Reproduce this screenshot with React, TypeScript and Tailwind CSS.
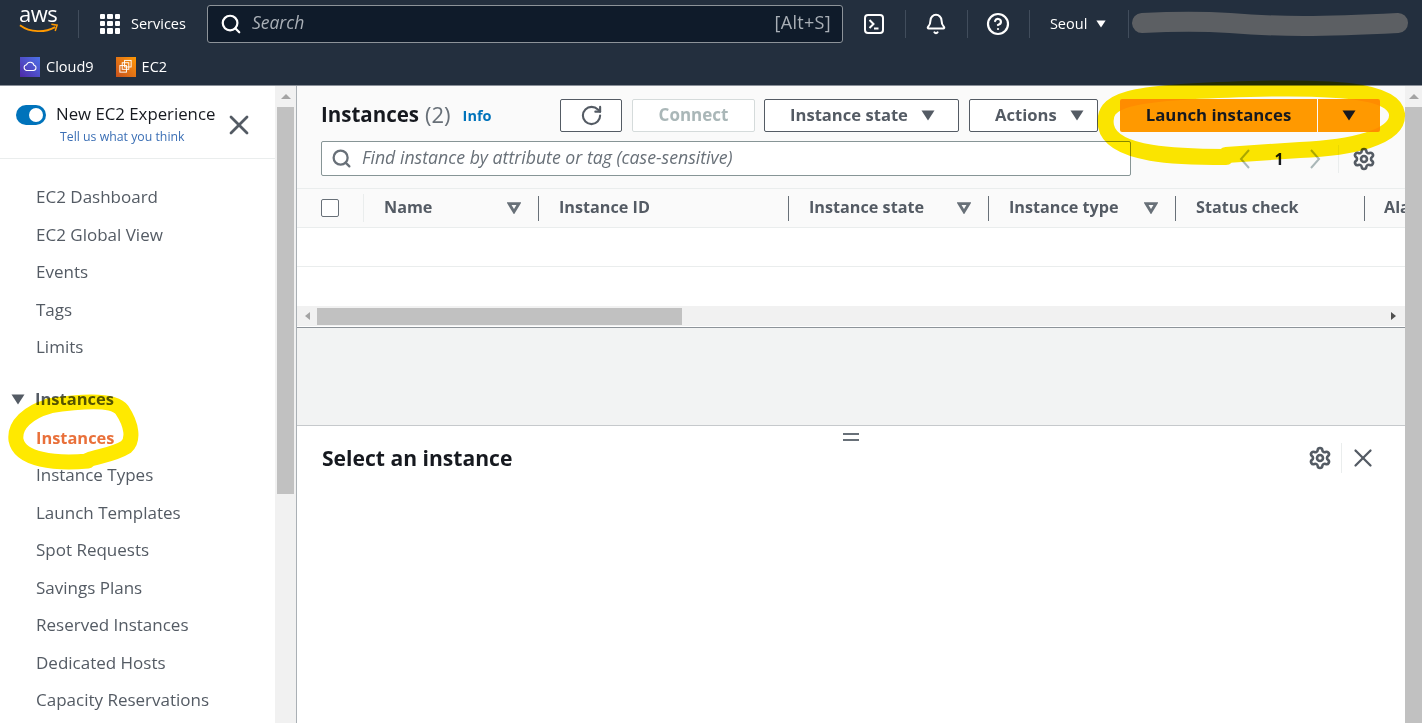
import React from "react";
import { Search, Bell, RotateCw, Settings, X, CircleHelp } from "lucide-react";

const Down: React.FC<{ className?: string }> = ({ className }) => (
  <svg viewBox="0 0 14 11" className={className} fill="currentColor">
    <path d="M0.5 0.5h13L7 10.5z" />
  </svg>
);

const FilterArrow: React.FC = () => (
  <svg viewBox="0 0 14 12" className="ml-auto w-[14px] h-[12px] text-[#687078]" fill="none" stroke="currentColor" strokeWidth="2.8">
    <path d="M2 1.6h10L7 9.8z" />
  </svg>
);

const Divider: React.FC = () => <div className="w-px h-[28px] bg-[#414d5c]" />;

const OutlineBtn: React.FC<{ label: string; w: string }> = ({ label, w }) => (
  <button className={`${w} h-[33px] flex items-center pl-[25px] gap-[13px] border border-[#545b64] rounded-[2px] bg-white text-[#545b64] font-bold text-[16.6px]`}>
    <span className="pb-[1px]">{label}</span>
    <Down className="w-[14px] h-[11px]" />
  </button>
);

const topNav = ["EC2 Dashboard", "EC2 Global View", "Events", "Tags", "Limits"];
const instanceNav = ["Instance Types", "Launch Templates", "Spot Requests", "Savings Plans", "Reserved Instances", "Dedicated Hosts", "Capacity Reservations"];

const columns = [
  { label: "Name", w: "w-[175px]", filter: true },
  { label: "Instance ID", w: "w-[250px]", filter: false },
  { label: "Instance state", w: "w-[200px]", filter: true },
  { label: "Instance type", w: "w-[187px]", filter: true },
  { label: "Status check", w: "w-[189px]", filter: false },
];

const Header: React.FC = () => (
  <header className="h-[86px] shrink-0 bg-[#232f3e] border-b border-[#8a9099] text-white">
    <div className="h-[47px] flex items-center">
      <div className="w-[78px] pl-[19px] relative h-full">
        <div className="text-[22px] leading-[26px] tracking-[-0.5px] font-normal">aws</div>
        <svg viewBox="0 0 42 12" className="w-[40px] h-[12px] -mt-[3px]" fill="none">
          <path d="M1 2c11 8 26 8 37 2" stroke="#ff9900" strokeWidth="2" />
          <path d="M34 1l6 1-2 6" stroke="#ff9900" strokeWidth="1.6" />
        </svg>
      </div>
      <div className="w-px h-[28px] bg-[#414d5c]" />
      <div className="ml-[21px] w-[20px] h-[20px] grid grid-cols-3 gap-[2px]">
        {Array.from({ length: 9 }).map((_, i) => (
          <div key={i} className="bg-white rounded-[1px]" />
        ))}
      </div>
      <span className="ml-[11px] text-[14.5px] font-medium">Services</span>
      <div className="ml-[21px] w-[636px] h-[38px] flex items-center border border-[#8d9399] rounded-[3px] bg-[#0f1b2a] pl-[12px] pr-[11px]">
        <Search className="w-[22px] h-[22px] text-white" strokeWidth={2.4} />
        <span className="ml-[10px] pb-[2px] italic text-[#a9afb6] text-[17.5px]">Search</span>
        <span className="ml-auto pb-[2px] text-[#a9afb6] text-[18px] tracking-[0.3px]">[Alt+S]</span>
      </div>
      <div className="w-[62px] flex justify-center">
        <svg viewBox="0 0 20 20" className="w-[20px] h-[20px]" fill="none" stroke="white" strokeWidth="2">
          <rect x="1" y="1" width="18" height="18" rx="3" />
          <path d="M5.5 6l4 4-4 4M10 14.5h4.5" />
        </svg>
      </div>
      <Divider />
      <div className="w-[61px] flex justify-center">
        <Bell className="w-[22px] h-[22px]" strokeWidth={2.2} />
      </div>
      <Divider />
      <div className="w-[61px] flex justify-center">
        <CircleHelp className="w-[24px] h-[24px]" strokeWidth={2.2} />
      </div>
      <Divider />
      <span className="ml-[20px] text-[14.5px] font-medium">Seoul</span>
      <Down className="ml-[9px] w-[10px] h-[8px]" />
      <div className="ml-[22px]"><Divider /></div>
      <svg viewBox="0 0 280 26" className="w-[282px] h-[26px]" fill="none">
        <path d="M12 12C50 10 70 10 100 12C150 16 190 16 268 12" stroke="#5c5f63" strokeWidth="20" strokeLinecap="round" />
      </svg>
    </div>
    <div className="h-[38px] pt-px flex items-center pl-[20px] text-[14.5px] font-medium">
      <div className="w-[20px] h-[20px] bg-gradient-to-tr from-[#4d27a8] to-[#4a72e8] flex items-center justify-center">
        <svg viewBox="0 0 16 12" className="w-[14px] h-[11px]" fill="none" stroke="white" strokeWidth="1.2">
          <path d="M4 10.5h8a3 3 0 0 0 .6-5.9A4.5 4.5 0 0 0 4 4a3.3 3.3 0 0 0 0 6.5z" />
        </svg>
      </div>
      <span className="ml-[6px]">Cloud9</span>
      <div className="ml-[22px] w-[20px] h-[20px] bg-gradient-to-tr from-[#c8511b] to-[#ff9900] flex items-center justify-center">
        <svg viewBox="0 0 16 16" className="w-[15px] h-[15px]" fill="none" stroke="white" strokeWidth="1">
          <rect x="7" y="1.5" width="7" height="7" />
          <rect x="4.5" y="4" width="7" height="7" />
          <rect x="2" y="7" width="7" height="7" />
        </svg>
      </div>
      <span className="ml-[6px]">EC2</span>
    </div>
  </header>
);

const Sidebar: React.FC = () => (
  <aside className="w-[275px] shrink-0 bg-white overflow-hidden">
    <div className="h-[73px] border-b border-[#eaeded] flex relative">
      <div className="pl-[16px] pt-[19px]">
        <div className="w-[30px] h-[20px] rounded-full bg-[#0073bb] flex items-center justify-end pr-[3px]">
          <div className="w-[14px] h-[14px] rounded-full bg-white" />
        </div>
      </div>
      <div className="ml-[11px] pt-[16px]">
        <div className="text-[16.8px] -ml-[1px] leading-[24px] text-[#16191f]">New EC2 Experience</div>
        <div className="ml-[3px] mt-[2px] text-[12.3px] leading-[18px] text-[#3b6fb5]">Tell us what you think</div>
      </div>
      <X className="absolute left-[223px] top-[23px] w-[32px] h-[32px] text-[#545b64]" strokeWidth={2.1} />
    </div>
    <nav className="pt-[19px] text-[17px] text-[#545b64]">
      {topNav.map((item) => (
        <div key={item} className="h-[37.5px] flex items-center pl-[36px]">{item}</div>
      ))}
      <div className="mt-[15.5px] h-[37.5px] flex items-center pl-[11px] font-bold text-[16.5px] text-[#545b64]">
        <Down className="w-[14px] h-[11px]" />
        <span className="ml-[10px]">Instances</span>
      </div>
      <div className="mt-[2px] h-[35.5px] flex items-center pl-[36px] font-bold text-[16.4px] text-[#e9703a]">Instances</div>
      {instanceNav.map((item) => (
        <div key={item} className="h-[37.5px] flex items-center pl-[36px]">{item}</div>
      ))}
    </nav>
  </aside>
);

const VScrollbar: React.FC<{ className: string; thumb: string }> = ({ className, thumb }) => (
  <div className={`${className} shrink-0 bg-[#f1f1f1] flex flex-col items-center`}>
    <div className="h-[21px] flex items-center justify-center">
      <div className="w-0 h-0 border-x-[5px] border-x-transparent border-b-[5px] border-b-[#a3a3a3]" />
    </div>
    <div className={`w-full bg-[#c1c1c1] ${thumb}`} />
  </div>
);

const PagerChevron: React.FC<{ d: string; className: string }> = ({ d, className }) => (
  <svg viewBox="0 0 12 20" className={`${className} w-[12px] h-[20px] text-[#aab7b8]`} fill="none" stroke="currentColor" strokeWidth="2">
    <path d={d} />
  </svg>
);

const Toolbar: React.FC = () => (
  <div className="h-[103px] shrink-0 bg-[#fafafa] border-b border-[#eaeded] pl-[24px] pr-[25px] pt-[13px]">
    <div className="flex items-center h-[33px]">
      <h1 className="text-[20.5px] pb-[2px] font-bold text-[#16191f]">Instances</h1>
      <span className="ml-[6px] pb-[2px] text-[22px] text-[#687078]">(2)</span>
      <span className="ml-[12px] text-[14.5px] font-bold text-[#0073bb]">Info</span>
      <button className="ml-auto w-[62px] h-[33px] flex items-center justify-center border border-[#545b64] rounded-[2px] bg-white">
        <RotateCw className="w-[23px] h-[23px] text-[#545b64]" strokeWidth={2.2} />
      </button>
      <button className="ml-[10px] w-[123px] h-[33px] pb-[2px] border border-[#d5dbdb] rounded-[2px] bg-white text-[#aab7b8] font-bold text-[17px]">Connect</button>
      <div className="ml-[9px]"><OutlineBtn label="Instance state" w="w-[195px]" /></div>
      <div className="ml-[10px]"><OutlineBtn label="Actions" w="w-[129px]" /></div>
      <button className="ml-[22px] w-[197px] h-[33px] pb-[2px] bg-[#ff9900] rounded-l-[2px] text-[#16191f] font-bold text-[16.8px]">Launch instances</button>
      <button className="ml-px w-[62px] h-[33px] bg-[#ff9900] rounded-r-[2px] flex items-center justify-center text-[#16191f]">
        <Down className="w-[14px] h-[11px]" />
      </button>
    </div>
    <div className="mt-[9px] flex items-center h-[35px]">
      <div className="w-[810px] h-[35px] flex items-center border border-[#879596] rounded-[2px] bg-white pl-[9px]">
        <Search className="w-[21px] h-[21px] text-[#687078]" strokeWidth={2.6} />
        <span className="ml-[10px] pb-[2px] italic text-[#687078] text-[17.7px]">Find instance by attribute or tag (case-sensitive)</span>
      </div>
      <PagerChevron className="ml-[108px]" d="M10 1L2 10l8 9" />
      <span className="ml-[21px] w-[14px] text-center font-bold text-[16px] text-[#16191f]">1</span>
      <PagerChevron className="ml-[23px]" d="M2 1l8 9-8 9" />
      <div className="ml-[17px] w-px h-[28px] bg-[#eaeded]" />
      <Settings className="ml-[13px] w-[24px] h-[24px] text-[#545b64]" strokeWidth={2.6} />
    </div>
  </div>
);

const InstancesTable: React.FC = () => (
  <div className="shrink-0 overflow-hidden">
    <div className="h-[39px] flex items-center bg-[#fafafa] border-b border-[#eaeded] font-bold text-[16.2px] text-[#545b64]">
      <div className="w-[67px] shrink-0 h-[28px] flex items-center pl-[24px] border-r border-[#eaeded]">
        <div className="w-[18px] h-[18px] border border-[#687078] rounded-[2px] bg-white" />
      </div>
      {columns.map((c) => (
        <div key={c.label} className={`${c.w} shrink-0 h-[25px] flex items-center pl-[20px] pr-[17px] border-r border-[#687078]`}>
          <span className="pb-[2px]">{c.label}</span>
          {c.filter && <FilterArrow />}
        </div>
      ))}
      <div className="pl-[19px] pb-[2px] w-[40px] overflow-hidden whitespace-nowrap">Alarm</div>
    </div>
    <div className="h-[39px] bg-white border-b border-[#eaeded]" />
    <div className="h-[39px] bg-white" />
    <div className="h-[20px] bg-[#f1f1f1] flex items-center">
      <div className="w-[20px] flex justify-center">
        <div className="w-0 h-0 border-y-[4px] border-y-transparent border-r-[5px] border-r-[#a3a3a3]" />
      </div>
      <div className="w-[365px] h-[17px] bg-[#c1c1c1]" />
      <div className="ml-auto w-[24px] flex justify-center">
        <div className="w-0 h-0 border-y-[4px] border-y-transparent border-l-[5px] border-l-[#505050]" />
      </div>
    </div>
    <div className="h-px bg-white" />
  </div>
);

const DetailPanel: React.FC = () => (
  <div className="relative flex-1 bg-white border-t border-[#c6c9cc] pl-[25px] pr-[27px] pt-[18px] flex items-start">
    <div className="absolute left-[546px] top-[7px] w-[16px] h-[8px] border-y-2 border-[#687078]" />
    <h2 className="text-[21.1px] font-bold leading-[28px] text-[#16191f]">Select an instance</h2>
    <div className="ml-auto flex items-center h-[30px] -mt-[1px] text-[#545b64]">
      <Settings className="w-[24px] h-[24px]" strokeWidth={2.6} />
      <div className="ml-[9px] w-px h-[30px] bg-[#eaeded]" />
      <X className="ml-[6px] w-[30px] h-[30px]" strokeWidth={1.8} />
    </div>
  </div>
);

const App: React.FC = () => {
  return (
    <div className="relative w-[1422px] h-[723px] overflow-hidden bg-white font-['Open_Sans','Noto_Sans',sans-serif]">
      <Header />
      <div className="flex h-[637px]">
        <Sidebar />
        <VScrollbar className="w-[21px] px-[2px]" thumb="h-[387px]" />
        <main className="flex-1 min-w-0 flex flex-col border-l border-[#aab0b5]">
          <Toolbar />
          <InstancesTable />
          <div className="h-[98px] shrink-0 bg-[#f2f3f3] border-t border-[#8d9399]" />
          <DetailPanel />
        </main>
        <VScrollbar className="w-[17px]" thumb="flex-1" />
      </div>
      {/* marker scribbles drawn on top of the screenshot */}
      <svg viewBox="0 0 1422 723" className="absolute inset-0 w-[1422px] h-[723px] pointer-events-none mix-blend-multiply" fill="none" stroke="#ffe900" strokeLinecap="round" strokeLinejoin="round">
        <path strokeWidth="16" d="M1226 157C1180 157 1112 156 1106 126C1102 100 1124 92 1250 89C1320 87 1394 88 1397 114C1399 138 1350 148 1300 150L1226 155" />
        <path strokeWidth="15" d="M48 406C75 402 113 398 122 410C132 425 134 440 126 447C115 454 100 456 88 460L88 461C55 464 20 460 16 440C14 425 28 412 50 406" />
      </svg>
    </div>
  );
};

export default App;
